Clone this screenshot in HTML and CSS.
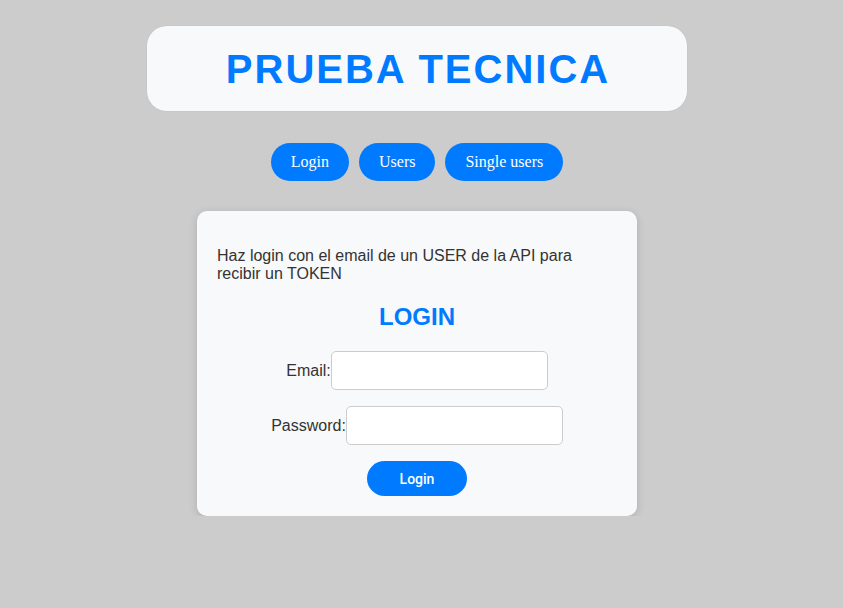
FILE: index.html
```html
<!DOCTYPE html>
<html lang="es">
<head>
<meta charset="utf-8">
<title>Prueba Tecnica</title>
<link rel="stylesheet" href="styles.css">
</head>
<body>
<div class="page">
  <header class="header">
    <h1 class="title">PRUEBA TECNICA</h1>
  </header>
  <nav class="nav">
    <button class="nav-btn">Login</button>
    <button class="nav-btn">Users</button>
    <button class="nav-btn">Single users</button>
  </nav>
  <section class="card">
    <p class="intro">Haz login con el email de un USER de la API para recibir un TOKEN</p>
    <h2 class="card-title">LOGIN</h2>
    <form class="form">
      <div class="row"><label class="label">Email:</label><input class="input" type="text"></div>
      <div class="row"><label class="label">Password:</label><input class="input" type="password"></div>
      <button class="submit" type="button">Login</button>
    </form>
  </section>
</div>
</body>
</html>
```
FILE: styles.css
```css
html, body {
  margin: 0;
  background: #cccccc;
}
body {
  font-family: "Liberation Sans", Arial, sans-serif;
  color: #333;
}
.page {
  width: 834px;
  padding-top: 26px;
  display: flex;
  flex-direction: column;
  align-items: center;
}
.header {
  width: 540px;
  height: 85px;
  box-sizing: border-box;
  background: #f8f9fa;
  border-radius: 20px;
  display: flex;
  align-items: center;
  justify-content: center;
  box-shadow: 0 0 2px rgba(0,0,0,0.08);
}
.title {
  margin: 0 0 0 2px;
  font-size: 40px;
  font-weight: bold;
  letter-spacing: 2px;
  color: #007bff;
  line-height: 46px;
}
.nav {
  margin-top: 32px;
  display: flex;
  gap: 10px;
}
.nav-btn {
  font-family: "Liberation Serif", "Times New Roman", serif;
  font-size: 16px;
  line-height: 18px;
  padding: 10px 20px;
  border: none;
  border-radius: 19px;
  background: #007bff;
  color: #fff;
}
.card {
  margin-top: 30px;
  width: 440px;
  box-sizing: border-box;
  padding: 20px;
  background: #f8f9fa;
  border-radius: 10px;
  box-shadow: 0 2px 8px rgba(0,0,0,0.15);
}
.intro {
  margin: 16px 0 0;
  font-size: 16px;
  line-height: 18px;
}
.card-title {
  margin: 20px 0 0;
  text-align: center;
  color: #007bff;
  font-size: 24px;
  line-height: 28px;
  font-weight: bold;
}
.form {
  margin-top: 20px;
  display: flex;
  flex-direction: column;
  align-items: center;
  gap: 16px;
}
.row {
  display: flex;
  align-items: center;
}
.label {
  font-size: 16px;
  color: #333;
}
.input {
  width: 217px;
  height: 39px;
  box-sizing: border-box;
  border: 1px solid #ccc;
  border-radius: 5px;
  background: #fff;
  padding: 8px;
  font-size: 16px;
}
.submit {
  width: 100px;
  height: 35px;
  border: none;
  border-radius: 18px;
  background: #007bff;
  color: #fff;
  font-family: Roboto, "Liberation Sans", sans-serif;
  font-size: 14px;
  font-weight: 500;
}
```
